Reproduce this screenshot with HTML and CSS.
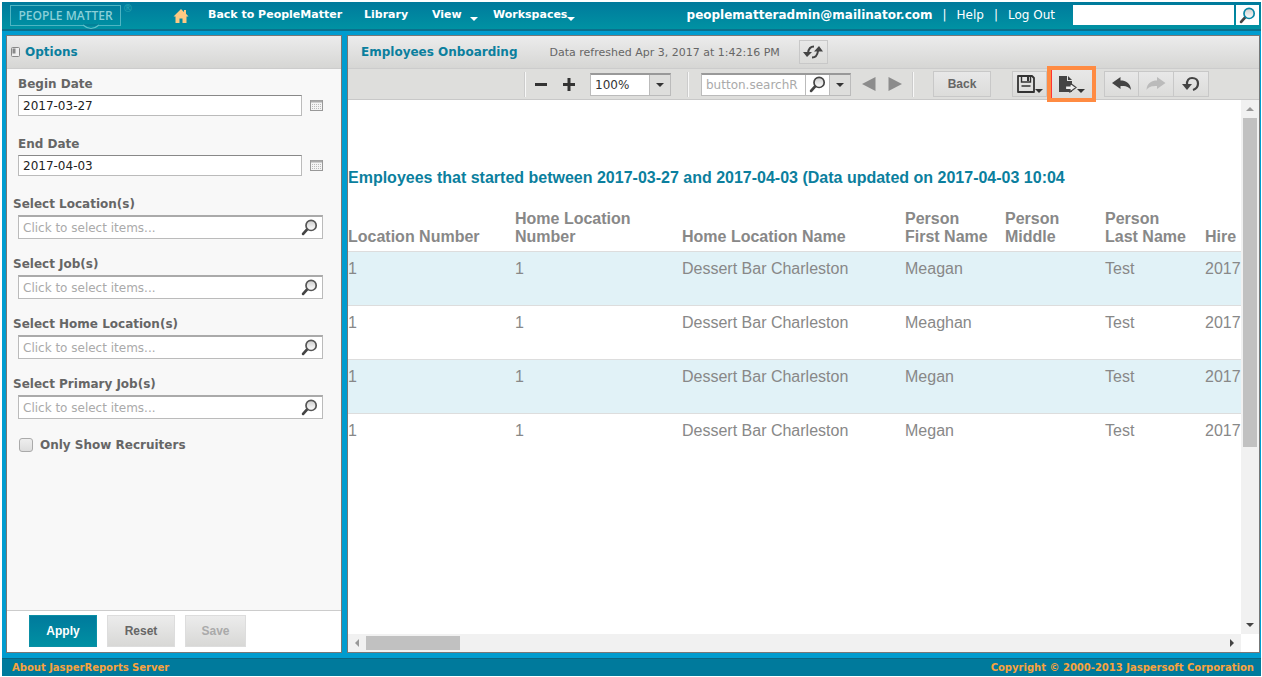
FILE: index.html
```html
<!DOCTYPE html>
<html lang="en">
<head>
<meta charset="UTF-8" />
<meta name="viewport" content="width=device-width, initial-scale=1" />
<title>Employees Onboarding</title>
<link rel="stylesheet" href="styles.css">
</head>
<body>

<!-- Shared icons -->
<svg class="defs" aria-hidden="true">
  <defs>
    <linearGradient id="lensFill" x1="0" y1="0" x2="0" y2="1">
      <stop offset="0" stop-color="#ccc" />
      <stop offset="1" stop-color="#fff" />
    </linearGradient>
  </defs>
  <symbol id="magnifier" viewBox="0 0 16 16">
    <path d="M6 9.500 L2 14" stroke="#444" stroke-width="2.600" stroke-linecap="round" />
    <circle cx="9.500" cy="6" r="4.800" fill="url(#lensFill)" stroke="currentColor" stroke-width="1.600" />
  </symbol>
  <symbol id="calendar" viewBox="0 0 13 11">
    <rect x=".5" y=".5" width="12" height="10" fill="#f4f4f4" stroke="#999" />
    <path d="M1 1.500h11" stroke="#aaa" stroke-width="2" />
    <path d="M2 4.500h9M2 6.500h9M2 8.500h9" stroke="#bbb" stroke-dasharray="1 1" />
  </symbol>
</svg>

<div class="page">
  <header class="banner">
    <a class="logo" href="#" aria-label="PeopleMatter">
      <span class="logo-text">PEOPLE MATTER</span>
      <svg class="logo-smile" viewBox="0 0 18 6"><path d="M1 1h16" stroke="#038198" stroke-width="2" /><path d="M1 1q8 7 16 0" fill="none" stroke="#5fc0ca" stroke-width="1.200" /></svg>
      <span class="logo-mark">®</span>
    </a>
    <nav class="main-nav">
      <a class="home" href="#" aria-label="Home">
        <svg width="16" height="16" viewBox="0 0 16 16" fill="#fdc983"><path d="M8 1L0.500 8.500h2V15h4v-4.500h3V15h4V8.500h2L13 5.700V2h-2v2z" /></svg>
      </a>
      <a class="nav-back" href="#">Back to PeopleMatter</a>
      <a class="nav-library" href="#">Library</a>
      <a class="nav-view" href="#">View <i class="caret"></i></a>
      <a href="#">Workspaces<i class="caret"></i></a>
    </nav>
    <div class="account">
      <b>peoplematteradmin@mailinator.com</b>
      <span class="bar">|</span>
      <a href="#">Help</a>
      <span class="bar">|</span>
      <a class="logout" href="#">Log Out</a>
    </div>
    <form class="site-search">
      <input type="text" aria-label="Search" />
      <button type="button" aria-label="Search"><svg width="17" height="17"><use href="#magnifier" /></svg></button>
    </form>
  </header>

  <main class="frame">
    <form class="panel options">
      <div class="panel-head">
        <svg width="9" height="10" viewBox="0 0 9 10"><rect x=".5" y=".5" width="8" height="9" rx="1" fill="#eee" stroke="#888" /><path d="M1.500 1.500h3v5h-3z" fill="#888" /></svg>
        <h2>Options</h2>
      </div>
      <div class="options-body">
        <div class="field date">
          <label for="beginDate">Begin Date</label>
          <div class="date-row">
            <input type="text" id="beginDate" value="2017-03-27" />
            <button type="button" class="icon-btn" aria-label="Pick begin date"><svg width="13" height="11"><use href="#calendar" /></svg></button>
          </div>
        </div>
        <div class="field date">
          <label for="endDate">End Date</label>
          <div class="date-row">
            <input type="text" id="endDate" value="2017-04-03" />
            <button type="button" class="icon-btn" aria-label="Pick end date"><svg width="13" height="11"><use href="#calendar" /></svg></button>
          </div>
        </div>
        <div class="field">
          <label for="locations">Select Location(s)</label>
          <div class="picker">
            <input type="text" id="locations" placeholder="Click to select items..." />
            <svg width="17" height="17"><use href="#magnifier" /></svg>
          </div>
        </div>
        <div class="field">
          <label for="jobs">Select Job(s)</label>
          <div class="picker">
            <input type="text" id="jobs" placeholder="Click to select items..." />
            <svg width="17" height="17"><use href="#magnifier" /></svg>
          </div>
        </div>
        <div class="field">
          <label for="homeLocations">Select Home Location(s)</label>
          <div class="picker">
            <input type="text" id="homeLocations" placeholder="Click to select items..." />
            <svg width="17" height="17"><use href="#magnifier" /></svg>
          </div>
        </div>
        <div class="field">
          <label for="primaryJobs">Select Primary Job(s)</label>
          <div class="picker">
            <input type="text" id="primaryJobs" placeholder="Click to select items..." />
            <svg width="17" height="17"><use href="#magnifier" /></svg>
          </div>
        </div>
        <div class="check">
          <input type="checkbox" id="recruiters" />
          <label for="recruiters">Only Show Recruiters</label>
        </div>
      </div>
      <div class="options-foot">
        <button type="button" class="btn primary">Apply</button>
        <button type="button" class="btn">Reset</button>
        <button type="button" class="btn save" disabled>Save</button>
      </div>
    </form>

    <section class="panel report">
      <div class="panel-head">
        <h1>Employees Onboarding</h1>
        <span class="refreshed">Data refreshed Apr 3, 2017 at 1:42:16 PM</span>
        <button type="button" class="tool refresh" aria-label="Refresh">
          <svg width="20" height="16" viewBox="0 0 20 16"><path d="M11 2.500C7 2.500 5.500 5 5 9M9 13.500c4 0 5.500-2.500 6-6.500" fill="none" stroke="#444" stroke-width="2" /><path d="M0 8h9l-5 5zM11 7.500h9L16 2z" fill="#444" /></svg>
        </button>
      </div>

      <div class="toolbar">
        <i class="divider"></i>
        <button type="button" class="icon-btn" aria-label="Zoom out"><svg width="14" height="14" viewBox="0 0 14 14"><path d="M1 7.500h12" stroke="#333" stroke-width="3" /></svg></button>
        <button type="button" class="icon-btn zoom-in" aria-label="Zoom in"><svg width="14" height="14" viewBox="0 0 14 14"><path d="M1 7.500h12M7 1v13" stroke="#333" stroke-width="3" /></svg></button>
        <div class="combo zoom">
          <input type="text" value="100%" aria-label="Zoom" />
          <button type="button" aria-label="Zoom levels"><i class="caret"></i></button>
        </div>
        <i class="divider"></i>
        <div class="combo search">
          <input type="text" placeholder="button.searchR" aria-label="Search report" />
          <button type="button" class="find" aria-label="Find"><svg width="17" height="17"><use href="#magnifier" /></svg></button>
          <button type="button" aria-label="Search options"><i class="caret"></i></button>
        </div>
        <div class="hits">
          <button type="button" class="icon-btn" aria-label="Previous"><svg width="14" height="14" viewBox="0 0 14 14"><path d="M13.500 0v14L0 7z" fill="#8c8c8c" /></svg></button>
          <button type="button" class="icon-btn" aria-label="Next"><svg width="14" height="14" viewBox="0 0 14 14"><path d="M.5 0v14L14 7z" fill="#8c8c8c" /></svg></button>
        </div>
        <i class="divider"></i>
        <button type="button" class="tool back">Back</button>
        <button type="button" class="tool save-report" aria-label="Save">
          <svg width="18" height="18" viewBox="0 0 18 18"><path d="M1 1h14l2 2v14H1z" fill="none" stroke="#333" stroke-width="1.800" stroke-linejoin="round" /><path d="M4.500 1.500v5.500h9v-5.500M4.500 11h9" fill="none" stroke="#333" stroke-width="1.400" /><path d="M10 2h2v4h-2z" fill="#333" /></svg>
          <i class="caret"></i>
        </button>
        <button type="button" class="tool export" aria-label="Export">
          <svg width="19" height="17" viewBox="0 0 19 17"><path d="M1 0h8v5h5v11H1z" fill="#444" /><path d="M10 0l4 4h-4z" fill="#444" /><path d="M7.500 10H12V7l6 4.500-6 4.500v-2.500H7.500z" fill="#eee" stroke="#444" stroke-width="1.200" /></svg>
          <i class="caret"></i>
        </button>
        <div class="history">
          <button type="button" class="tool" aria-label="Undo"><svg width="20" height="14" viewBox="0 0 20 14"><path d="M0 6L8.500 0v3.500C14 3.500 18.500 6 19 13 16.500 9.500 14 9 8.500 9v3z" fill="#444" /></svg></button>
          <button type="button" class="tool" aria-label="Redo" disabled><svg width="20" height="14" viewBox="0 0 20 14"><path d="M19.500 6L11 0v3.500C5.500 3.500 1 6 .5 13 3 9.500 5.500 9 11 9v3z" fill="#bbb" /></svg></button>
          <button type="button" class="tool" aria-label="Undo all"><svg width="18" height="16" viewBox="0 0 18 16"><path d="M5 9C4.500 4 7 2 10 2c4 0 6 2.500 6 5.500S14 13 11 14" fill="none" stroke="#444" stroke-width="2.200" /><path d="M0 8h10l-5 6z" fill="#444" /></svg></button>
        </div>
      </div>

      <div class="viewer">
        <div class="canvas">
          <h3>Employees that started between 2017-03-27 and 2017-04-03 (Data updated on 2017-04-03 10:04</h3>
          <table>
            <colgroup>
              <col class="wide"><col class="wide"><col class="name"><col><col><col><col>
            </colgroup>
            <thead>
              <tr>
                <th>Location Number</th>
                <th>Home Location<br>Number</th>
                <th>Home Location Name</th>
                <th>Person<br>First Name</th>
                <th>Person<br>Middle</th>
                <th>Person<br>Last Name</th>
                <th>Hire</th>
              </tr>
            </thead>
            <tbody>
              <tr><td>1</td><td>1</td><td>Dessert Bar Charleston</td><td>Meagan</td><td></td><td>Test</td><td>2017</td></tr>
              <tr><td>1</td><td>1</td><td>Dessert Bar Charleston</td><td>Meaghan</td><td></td><td>Test</td><td>2017</td></tr>
              <tr><td>1</td><td>1</td><td>Dessert Bar Charleston</td><td>Megan</td><td></td><td>Test</td><td>2017</td></tr>
              <tr><td>1</td><td>1</td><td>Dessert Bar Charleston</td><td>Megan</td><td></td><td>Test</td><td>2017</td></tr>
            </tbody>
          </table>
        </div>
        <div class="scroll vertical">
          <i class="arrow up"></i>
          <div class="track"><div class="thumb"></div></div>
          <i class="arrow down"></i>
        </div>
        <div class="scroll horizontal">
          <i class="arrow left"></i>
          <div class="track"><div class="thumb"></div></div>
          <i class="arrow right"></i>
        </div>
      </div>
    </section>
  </main>

  <footer class="footer">
    <a href="#">About JasperReports Server</a>
    <span>Copyright © 2000-2013 Jaspersoft Corporation</span>
  </footer>
</div>

</body>
</html>
```

FILE: styles.css
```css
* {
  box-sizing: border-box;
}
body {
  margin: 0;
  background: #fff;
  color: #666;
  font-family: "DejaVu Sans", Verdana, sans-serif;
  font-size: 12px;
}
a {
  color: inherit;
  text-decoration: none;
}
h1, h2, h3 {
  margin: 0;
}
input, button {
  margin: 0;
  font-family: inherit;
  font-size: 12px;
  border-radius: 0;
}
input:focus {
  outline: none;
}
input::placeholder {
  color: #aaa;
  opacity: 1;
}
svg {
  display: block;
  flex: none;
}
.defs {
  position: absolute;
  width: 0;
  height: 0;
}
.page {
  display: flex;
  flex-direction: column;
  height: 100vh;
  padding: 2px 1px 1px 2px;
}

/* Banner */
.banner {
  display: flex;
  flex: none;
  height: 29px;
  background: linear-gradient(#007a9c, #0092a3);
  border-bottom: 2px solid #0a708d;
  color: #fff;
}
.logo {
  position: relative;
  width: 111px;
  height: 21px;
  margin: 3px 0 0 8px;
  border: 1px solid #4fb5c3;
  color: #8ad0d8;
  font-family: "Open Sans", sans-serif;
  font-size: 12px;
  font-weight: 600;
  line-height: 19px;
  text-align: center;
  white-space: nowrap;
}
.logo-smile {
  position: absolute;
  left: 71px;
  bottom: -5px;
  width: 18px;
  height: 6px;
}
.logo-mark {
  position: absolute;
  right: -12px;
  top: -7px;
  color: #25a5b3;
  font-size: 10px;
}
.main-nav {
  display: flex;
  flex: 1;
  font-size: 11px;
  line-height: 26px;
  font-weight: bold;
  white-space: nowrap;
}
.home {
  margin: 6px 19px 0 52px;
}
.nav-back {
  width: 156px;
}
.nav-library {
  width: 68px;
}
.nav-view {
  width: 61px;
}
.caret {
  display: inline-block;
  width: 8px;
  border: 4px solid transparent;
  border-top-color: currentColor;
  border-bottom: 0;
}
.main-nav .caret {
  vertical-align: -3px;
}
.nav-view .caret {
  margin-left: 4px;
}
.account {
  display: flex;
  gap: 10px;
  margin-right: 18px;
  line-height: 26px;
  white-space: nowrap;
}
.site-search {
  display: flex;
  gap: 2px;
  height: 20px;
  margin: 3px 2px 0 0;
}
.site-search input {
  width: 161px;
  border: 0;
}
.site-search button {
  width: 23px;
  padding: 2px 3px;
  border: 0;
  background: #fff;
  color: #0b87a5;
}

/* Panels */
.frame {
  display: flex;
  flex: 1;
  gap: 5px;
  min-height: 0;
  padding: 4px 1px 5px 4px;
  background: #009ccf;
}
.panel {
  display: flex;
  flex-direction: column;
  border: 1px solid #777;
}
.panel-head {
  display: flex;
  flex: none;
  align-items: center;
  height: 33px;
  background: linear-gradient(#ececec, #d6d6d4);
  border-bottom: 1px solid #ccc;
}
.panel-head h1, .panel-head h2 {
  color: #0b7f9e;
  font-size: 12px;
}
.options {
  flex: 0 0 336px;
  background: #f8f8f8;
}
.options .panel-head {
  gap: 5px;
  padding-left: 4px;
}
.options-body {
  flex: 1;
  padding: 8px 18px 0 6px;
}
.field {
  height: 60px;
}
.field label {
  display: block;
  height: 18px;
  line-height: 15px;
  font-weight: bold;
}
.date label {
  padding-left: 5px;
}
.date-row, .picker {
  display: flex;
  align-items: center;
  margin-left: 5px;
}
.date-row {
  justify-content: space-between;
}
.date-row input {
  width: 284px;
  height: 21px;
  padding: 0 4px;
  border: 1px solid #bbb;
  border-top-color: #888;
  color: #222;
}
.icon-btn {
  padding: 0;
  border: 0;
  background: none;
}
.picker {
  height: 24px;
  padding: 0 4px;
  background: #fff;
  border: 1px solid #bbb;
  border-top: 2px solid #aaa;
  color: #555;
}
.picker input {
  flex: 1;
  padding: 0;
  border: 0;
}
.check {
  display: flex;
  align-items: center;
  gap: 7px;
  padding: 1px 0 0 6px;
  font-weight: bold;
}
.check input {
  appearance: none;
  width: 14px;
  height: 14px;
  border: 1px solid #aaa;
  border-radius: 3px;
  background: linear-gradient(#eee, #ddd);
}
.options-foot {
  display: flex;
  gap: 10px;
  height: 42px;
  padding: 4px 22px;
  background: #fff;
  border-top: 1px solid #ccc;
}
.btn {
  width: 68px;
  height: 32px;
  border: 1px solid #ddd;
  background: linear-gradient(#ececec, #d8d8d6);
  color: #666;
  font-family: "Liberation Sans", Arial, sans-serif;
  font-weight: bold;
}
.btn.primary {
  border-color: #0b8fa5;
  background: linear-gradient(#007a9c, #0090a3);
  color: #fff;
}
.btn.save {
  width: 61px;
  color: #aaa;
}

/* Report */
.report {
  flex: 1;
  min-width: 0;
  background: #fff;
}
.report .panel-head {
  padding-left: 13px;
}
.refreshed {
  margin: 0 19px 0 32px;
  font-size: 11px;
}
.tool {
  display: flex;
  align-items: center;
  justify-content: center;
  width: 35px;
  height: 26px;
  padding: 0;
  border: 1px solid #c8c8c8;
  background: linear-gradient(#e8e8e8, #dcdcda);
  color: #333;
}
.refresh {
  width: 29px;
  height: 24px;
}
.toolbar {
  display: flex;
  flex: none;
  align-items: center;
  justify-content: flex-end;
  height: 31px;
  padding-right: 50px;
  background: #dededc;
  border-bottom: 1px solid #c8c8c8;
}
.divider {
  width: 2px;
  height: 25px;
  margin-right: 8px;
  background: #f8f8f8;
  border-left: 1px solid #ccc;
}
.zoom-in {
  margin: 0 14px;
}
.combo {
  display: flex;
  height: 23px;
  margin-right: 16px;
  border: 1px solid #bbb;
  border-top: 2px solid #999;
}
.combo input {
  min-width: 0;
  flex: 1;
  padding: 0 4px;
  border: 0;
  color: #333;
}
.combo button {
  width: 21px;
  padding: 0;
  border: 0;
  border-left: 1px solid #bbb;
  background: #dededc;
  color: #333;
}
.combo .caret {
  display: block;
  margin: 0 auto;
}
.zoom {
  width: 81px;
}
.search {
  width: 150px;
  margin: 0 11px 0 4px;
}
.combo .find {
  width: 24px;
  padding-left: 3px;
  background: #fff;
  color: #444;
}
.hits {
  display: flex;
  gap: 12px;
  margin-right: 10px;
}
.back {
  width: 58px;
  margin: 0 21px 0 11px;
  color: #666;
  font-family: "Liberation Sans", Arial, sans-serif;
  font-weight: bold;
}
.tool .caret {
  margin-top: 13px;
}
.export {
  width: 49px;
  height: 36px;
  border: 4px solid #ff8b42;
  box-shadow: inset 1px 0 #f33;
}
.history {
  display: flex;
  margin-left: 8px;
}
.history .tool + .tool {
  border-left: 0;
}
.viewer {
  display: grid;
  flex: 1;
  grid-template-columns: minmax(0, 1fr) 18px;
  grid-template-rows: minmax(0, 1fr) 18px;
  min-height: 0;
}
.canvas {
  overflow: hidden;
  padding-top: 69px;
  color: #888;
  font-family: "Liberation Sans", Arial, sans-serif;
  font-size: 16px;
  line-height: 18px;
}
.canvas h3 {
  color: #0b7f9e;
  font-size: 16px;
  white-space: nowrap;
}
table {
  width: 100%;
  margin-top: 18px;
  border-collapse: collapse;
  table-layout: fixed;
}
col {
  width: 100px;
}
col.wide {
  width: 167px;
}
col.name {
  width: 223px;
}
col:last-child {
  width: auto;
}
th, td {
  padding: 0;
  text-align: left;
  white-space: nowrap;
}
th {
  height: 46px;
  padding-bottom: 5px;
  vertical-align: bottom;
}
td {
  height: 54px;
  padding-top: 8px;
  border-top: 1px solid #ddd;
  vertical-align: top;
}
tbody tr:nth-child(odd) {
  background: #e1f2f7;
}
.scroll {
  display: flex;
  align-items: center;
  justify-content: space-between;
  background: #f1f1f1;
}
.vertical {
  flex-direction: column;
  padding: 7px 0;
}
.horizontal {
  padding: 0 7px;
}
.track {
  display: flex;
  flex: 1;
}
.vertical .track {
  flex-direction: column;
  width: 14px;
  padding: 7px 0;
}
.horizontal .track {
  height: 14px;
  padding: 0 7px;
}
.thumb {
  background: #c1c1c1;
}
.vertical .thumb {
  height: 66%;
}
.horizontal .thumb {
  width: 11%;
}
.arrow {
  border: 4px solid transparent;
}
.up {
  border-top: 0;
  border-bottom-color: #999;
}
.down {
  border-bottom: 0;
  border-top-color: #444;
}
.left {
  border-left: 0;
  border-right-color: #999;
}
.right {
  border-right: 0;
  border-left-color: #444;
}

/* Footer */
.footer {
  display: flex;
  flex: none;
  justify-content: space-between;
  height: 18px;
  padding: 0 7px 0 10px;
  background: #007a9c;
  border-top: 1px solid #0a6580;
  color: #f9a23c;
  font-size: 10px;
  font-weight: bold;
  line-height: 17px;
}
```
